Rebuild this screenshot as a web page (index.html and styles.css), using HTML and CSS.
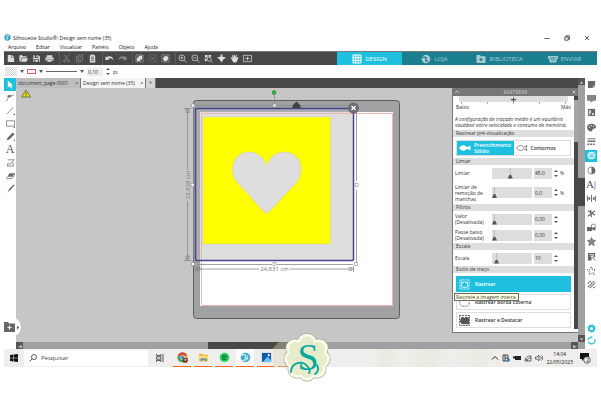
FILE: index.html
```
<!DOCTYPE html>
<html lang="pt-BR">
  <head>
    <meta charset="utf-8" />
    <title>Silhouette Studio</title>
    <link rel="stylesheet" href="styles.css">
  </head>

  <body>
    <header class="titlebar">
      <svg class="app-icon" viewBox="0 0 8 8"><circle cx="4" cy="4" r="3.6" fill="#2a9fc4"/><path d="M5.8 2.3C4 1 2 2.6 3.6 3.8S5 6 2.4 5.6" fill="none" stroke="#fff" stroke-width="1.1"/></svg>
      <span class="app-title">Silhouette Studio®: Design sem nome (35)</span>
      <div class="window-buttons">
        <button aria-label="Minimizar"><svg viewBox="0 0 6 6"><path d="M.5 3.5h5" /></svg></button>
        <button aria-label="Restaurar"><svg viewBox="0 0 6 6"><path d="M.8 2h3.4v3.2H.8zM2 2V.8h3.4v3.4H4.3" /></svg></button>
        <button aria-label="Fechar"><svg viewBox="0 0 6 6"><path d="M1 1l4 4M5 1L1 5" /></svg></button>
      </div>
    </header>

    <nav class="menu">
      <a href="#">Arquivo</a>
      <a href="#">Editar</a>
      <a href="#">Visualizar</a>
      <a href="#">Painéis</a>
      <a href="#">Objeto</a>
      <a href="#">Ajuda</a>
    </nav>

    <div class="toolbar">
      <div class="tool-group">
        <button aria-label="Novo"><svg viewBox="0 0 10 10"><path class="f" d="M2 1h4v3h3v5H2zM6.700 1L9 3.300H6.700z"/></svg></button>
        <button aria-label="Abrir"><svg viewBox="0 0 10 10"><path class="f" d="M.5 1.500h3l1 1h4V4H3L1.500 8.500h-1zM3.500 4.700H10L8.300 8.500H2.200z"/></svg></button>
        <button aria-label="Salvar"><svg viewBox="0 0 10 10"><path class="f" d="M1.500 1.500H3v3h4v-3l1.700 1v6H7.500v-3h-5v3h-1zM4.800 1.500h1.400v2H4.800zM3.500 6.500h3v2h-3z"/></svg></button>
        <button aria-label="Imprimir"><svg viewBox="0 0 10 10"><path class="f" d="M2 1.500h6v2H2zM.5 4h9v3.500H8.300V6H1.700v1.500H.5zM2.500 6.700h5v2h-5z"/></svg></button>
      </div>
      <div class="tool-group">
        <button class="dim" aria-label="Recortar"><svg viewBox="0 0 10 10"><path class="s" d="M2.500 1l4 6M7.500 1l-4 6"/><circle class="s" cx="2.800" cy="7.800" r="1.100"/><circle class="s" cx="7.200" cy="7.800" r="1.100"/></svg></button>
        <button class="dim" aria-label="Copiar"><svg viewBox="0 0 10 10"><path class="s" d="M3.500 1h5v6h-5zM3 3H1.500v6h5V7.500M5 3h2M5 4.500h2"/></svg></button>
        <button aria-label="Colar"><svg viewBox="0 0 10 10"><path class="f" d="M3.500.5h3v1H8V9.500H2v-8h1.500z"/><path d="M3.200 3.500h3.600M3.200 5.300h3.600M3.200 7.100h3.600" stroke="#484848" stroke-width=".8"/></svg></button>
      </div>
      <div class="tool-group">
        <button aria-label="Desfazer"><svg viewBox="0 0 10 10"><path class="f" d="M.5 2.500l1.400 1C4.500 1.500 9 2.500 9.500 7 7.500 4.700 5.500 4.500 3.800 5l1.400 1.200-4.700.8z"/></svg></button>
        <button class="dim" aria-label="Refazer"><svg viewBox="0 0 10 10"><path class="f" d="M9.500 2.500l-1.400 1C5.500 1.500 1 2.500.5 7 2.500 4.700 4.500 4.500 6.200 5L4.800 6.200l4.700.8z"/></svg></button>
      </div>
      <div class="tool-group">
        <button aria-label="Selecionar tudo"><svg viewBox="0 0 10 10"><path class="s" stroke-dasharray="1 1" d="M1 1h8v8H1z"/><path class="f" d="M2 4h2V2h4v4H6v2H2z"/></svg></button>
        <button class="dim" aria-label="Desmarcar"><svg viewBox="0 0 10 10"><path class="s" stroke-dasharray="1 1" d="M1 1h8v8H1z"/><path class="s" d="M3 3l4 4M7 3L3 7"/></svg></button>
        <button aria-label="Selecionar por cor"><svg viewBox="0 0 10 10"><path class="s" stroke-dasharray="1 1" d="M1 1h8v8H1z"/><path class="f" d="M2 4.500L5 2l3 1v3L5 8.500 3 7z"/></svg></button>
      </div>
      <div class="tool-group">
        <button aria-label="Mais zoom"><svg viewBox="0 0 10 10"><circle class="s" cx="4.300" cy="4.300" r="3.300"/><path class="s" d="M6.700 6.700L9.500 9.500M2.700 4.300h3.200M4.300 2.700v3.200"/></svg></button>
        <button aria-label="Menos zoom"><svg viewBox="0 0 10 10"><circle class="s" cx="4.300" cy="4.300" r="3.300"/><path class="s" d="M6.700 6.700L9.500 9.500M2.700 4.300h3.200"/></svg></button>
        <button aria-label="Zoom na seleção"><svg viewBox="0 0 10 10"><path class="f" d="M1 1h3v3H1zM5 1h3v2H5zM1 5h2v3H1z"/><circle class="s" cx="5.800" cy="5.800" r="2.200"/><path class="s" d="M7.500 7.500l2 2"/></svg></button>
        <button aria-label="Arrastar zoom"><svg viewBox="0 0 10 10"><path class="f" d="M4 .5h2v2.500l3.500.5v1L7.500 5.500 5 9.500 2.500 5.500.5 4.500v-1L4 3z"/></svg></button>
        <button aria-label="Panorâmica"><svg viewBox="0 0 10 10"><path class="f" d="M.7 4l1-.5L3 5 2.200 1.500h1L4.200 4V.7h1.100L5.600 4l.9-3 1 .2L7.200 5l1.400-2 .9.5L7.800 8l-1 1.500H3.700z"/></svg></button>
        <button aria-label="Ajustar à janela"><svg viewBox="0 0 10 10"><path class="s" d="M.5 1.500h9v7h-9zM2.500 5h5M5 3v4"/></svg></button>
      </div>
      <nav class="modes">
        <a href="#" class="active"><svg viewBox="0 0 10 10"><path d="M1 1h8v8H1zM3.700 1v8M6.300 1v8M1 3.700h8M1 6.300h8" fill="none" stroke="#fff" stroke-width="1"/></svg>DESIGN</a>
        <a href="#"><svg viewBox="0 0 10 10"><circle cx="5" cy="5" r="4.300" fill="#a5cbd2"/><path d="M1 3.500c3-1 5 0 4 1.500S5 7.500 7 7" fill="none" stroke="#1b7f90" stroke-width="1.300"/></svg>LOJA</a>
        <a href="#"><svg viewBox="0 0 10 10"><path d="M.5 1h3.500l1 1.200h4.500V9h-9z" fill="#a5cbd2"/><path d="M5 3.700v3.600M3.200 5.500h3.600" stroke="#1b7f90" stroke-width="1.200"/></svg>BIBLIOTECA</a>
        <a href="#"><svg viewBox="0 0 10 10"><path d="M0 2h10v3H8.500v3.500h-7V5H0z" fill="#a5cbd2"/><path d="M1.500 4h7M3 6h4" stroke="#1b7f90" stroke-width=".8"/></svg>ENVIAR</a>
      </nav>
    </div>

    <div class="options">
      <button class="swatch checker" aria-label="Cor de preenchimento"></button>
      <span class="caret"></span>
      <button class="swatch outline" aria-label="Cor da linha"></button>
      <span class="caret"></span>
      <button class="line-style" aria-label="Estilo de linha"></button>
      <span class="caret"></span>
      <input type="text" id="thickness" value="0,10">
      <span class="spinner"><button aria-label="Aumentar"></button><button aria-label="Diminuir"></button></span>
      <label for="thickness">pt</label>
    </div>

    <main class="workspace">
      <aside class="toolbox">
        <button class="selected" aria-label="Selecionar"><svg viewBox="0 0 10 10"><path d="M2 .5l6 5.700-2.500.2L7 9l-1.300.6-1.300-2.700L2 8.500z" fill="#fff"/></svg></button>
        <button aria-label="Editar pontos"><svg viewBox="0 0 10 10"><path class="s" d="M1 9c0-4 3-5.500 8-7M.5 3.500h6"/><path class="f" d="M2.500 2.300h2.500v2.500H2.500z"/></svg></button>
        <button aria-label="Linha"><svg viewBox="0 0 10 10"><path class="s" d="M1 9l7-7.500"/><path class="f" d="M10 8v2H8z"/></svg></button>
        <button aria-label="Retângulo"><svg viewBox="0 0 10 10"><path class="s" d="M.5 2h9v6h-9z"/><path class="f" d="M10 8v2H8z"/></svg></button>
        <button aria-label="Desenho livre"><svg viewBox="0 0 10 10"><path class="f" d="M7.500.5L9.500 2.500 4 8 .5 9.500 2 6z"/><path class="f" d="M10 8v2H8z"/></svg></button>
        <button class="letter" aria-label="Texto">A</button>
        <button aria-label="Esboço"><svg viewBox="0 0 10 10"><path class="s" d="M2 2h6M1.500 9h7l-1-4M1.500 9l1-4M3 7l2-.3L9.500 1"/></svg></button>
        <button aria-label="Borracha"><svg viewBox="0 0 10 10"><path class="f" d="M4 2.500h5.500L7 6.500H1.500z"/><path class="s" d="M1 6.500v2h5.500l3-4v-2"/></svg></button>
        <button aria-label="Faca"><svg viewBox="0 0 10 10"><path class="f" d="M8.500.5l1 1L5.500 6 1.500 9.500 4 5z"/></svg></button>
        <button class="library" aria-label="Abrir biblioteca"><svg viewBox="0 0 16 14"><path d="M0 2h4l1 1.500h6V12H0z" fill="#666"/><path d="M5.500 5.500v4M3.500 7.500h4" stroke="#fff" stroke-width="1.200"/><path d="M13 5.500l2 2-2 2z" fill="#555"/></svg></button>
      </aside>

      <section class="stage">
        <div class="tabs">
          <button class="tab">document_page-0001 <span>×</span></button>
          <button class="tab current">Design sem nome (35) <span>×</span></button>
          <button class="tab add" aria-label="Novo documento">+</button>
        </div>

        <div class="canvas">
          <svg class="drawing" viewBox="0 0 430 254" width="430" height="254">
            <!-- warning -->
            <path d="M10 2l4.500 7h-9z" fill="#f3e600" stroke="#555" stroke-width=".8"/>
            <path d="M10 4.500v2.200M10 7.400v.9" stroke="#333" stroke-width=".9"/>
            <!-- mat and page -->
            <rect x="177.500" y="12.500" width="206" height="218" rx="3" fill="#9fa1a2" stroke="#5a5c5e"/>
            <rect x="184" y="24" width="193" height="194" fill="#fff"/>
            <rect x="179.500" y="20.500" width="158" height="152" fill="#abacb2"/>
            <path d="M184 24h153v148H184z" fill="#dedede"/>
            <path d="M185.500 25.500h191v192h-191z" fill="none" stroke="#edb4b4"/>
            <path fill="#ffff00" stroke="#c9c9b0" stroke-width=".5" fill-rule="evenodd" d="M187 29h127.500v127H187zM250.700 125.500C244 121 234 108 229 102.500 221 95 216.500 90 216.500 81c0-10 7-17 16.500-17 8.500 0 14.500 5 17.700 13.500C254 69 260 64 268 64c10 0 17 7 17 17 0 9-4.500 14-12 21.500C267 108 257 121 250.700 125.500z"/>
            <rect x="179.500" y="20.500" width="158" height="152" rx="1" fill="none" stroke="#45458a" stroke-width="1.500"/>
            <!-- selection frame and dimensions -->
            <path d="M179 17.500h76M262 17.500h78M177.500 19v153M340.500 20v73M340.500 102v73M180 176.500h76M261 176.500h76M171.500 20v62M171.500 113v59M168 20.500h7M168 172.500h7M180 181h63M274 181h63M179.500 178v6M337.500 178v6M258.500 6v9" fill="none" stroke="#8a8a8a" stroke-width=".8"/>
            <path d="M170 21.500h3v3h-3zM170 168h3v3h-3zM181 179.500h3v3h-3zM333 179.500h3v3h-3z" fill="none" stroke="#777" stroke-width=".6"/>
            <path d="M175.500 16h3v3h-3zM257 16h3v3h-3zM175 95.500h3v3h-3zM339 95.500h3v3h-3zM175.500 174.500h3v3h-3zM257 174.500h3v3h-3zM338.500 174.500h3v3h-3z" fill="#fff" stroke="#888" stroke-width=".6"/>
            <circle cx="258" cy="4.500" r="1.800" fill="#19d819" stroke="#286428" stroke-width=".7"/>
            <path d="M276.500 17.500l4-4 4 4v2.500h-8z" fill="#3f4144"/>
            <circle cx="337.500" cy="20" r="5.500" fill="#6b6d70"/>
            <path d="M335.500 18l4 4M339.500 18l-4 4" stroke="#fff" stroke-width="1.200"/>
            <text x="258.500" y="183" text-anchor="middle">24,831 cm</text>
            <text transform="translate(173.500 97) rotate(-90)" text-anchor="middle">23,939 cm</text>
          </svg>

          <section class="panel">
            <header class="panel-head">
              <svg viewBox="0 0 6 6"><path d="M1 4l2-2 2 2"/></svg>
              <h2>RASTREAR</h2>
              <svg viewBox="0 0 6 6"><path d="M1.500 1.500l3 3M4.500 1.500l-3 3"/></svg>
            </header>
            <div class="panel-main">
              <div class="panel-body">
                <div class="quality">
                  <input type="range" aria-label="Qualidade" min="0" max="4" value="2">
                  <div class="ticks"><i></i><i></i><i></i><i></i><i></i></div>
                  <div class="ends"><span>Baixo</span><span>Máx</span></div>
                </div>
                <p class="hint">A configuração de traçado médio é um equilíbrio saudável entre velocidade e consumo de memória.</p>

                <h3>Rastrear pré-visualização</h3>
                <div class="preview">
                  <button class="on"><svg viewBox="0 0 12 8"><path d="M0 4c3-4 6-3 8-.7L11.500 1.500v5L8 4.700C6 7 3 8 0 4z" fill="#fff"/></svg>Preenchimento Sólido</button>
                  <button><svg viewBox="0 0 12 8"><path d="M.5 4c3-4 5.500-2.500 7-.7L11 1.500 10 4l1 2.500-3.500-1.800C6 6.500 3.500 8 .5 4z" fill="none" stroke="#666" stroke-width=".8"/></svg>Contornos</button>
                </div>

                <h3>Limiar</h3>
                <div class="field">
                  <label for="threshold">Limiar</label>
                  <input type="range" aria-label="Limiar" value="45">
                  <input type="text" id="threshold" value="45,0">
                  <span class="spinner"><button aria-label="Aumentar"></button><button aria-label="Diminuir"></button></span>
                  <span>%</span>
                </div>
                <div class="field tall">
                  <label for="speck">Limiar de remoção de manchas</label>
                  <input type="range" aria-label="Limiar de remoção de manchas" value="0">
                  <input type="text" id="speck" value="0,0">
                  <span class="spinner"><button aria-label="Aumentar"></button><button aria-label="Diminuir"></button></span>
                  <span>%</span>
                </div>

                <h3>Filtros</h3>
                <div class="field">
                  <label for="high">Valor (Desativada)</label>
                  <input type="range" aria-label="Valor" value="0">
                  <input type="text" id="high" value="0,00">
                  <span class="spinner"><button aria-label="Aumentar"></button><button aria-label="Diminuir"></button></span>
                </div>
                <div class="field">
                  <label for="low">Passe baixo (Desativada)</label>
                  <input type="range" aria-label="Passe baixo" value="0">
                  <input type="text" id="low" value="0,00">
                  <span class="spinner"><button aria-label="Aumentar"></button><button aria-label="Diminuir"></button></span>
                </div>

                <h3>Escala</h3>
                <div class="field">
                  <label for="scale">Escala</label>
                  <input type="range" aria-label="Escala" value="6">
                  <input type="text" id="scale" value="10">
                  <span class="spinner"><button aria-label="Aumentar"></button><button aria-label="Diminuir"></button></span>
                </div>

                <h3>Estilo de traço</h3>
                <div class="styles">
                  <button class="on"><svg viewBox="0 0 12 12"><path d="M1 1h10v10H1z" fill="none" stroke="#fff" stroke-width=".9" stroke-dasharray="2 1"/><path d="M3 3l2 1 1-1 1 1 2-1v3l1 2-2 1H4L2 8l1-2z" fill="none" stroke="#fff"/></svg>Rastrear</button>
                  <button><svg viewBox="0 0 12 12"><path d="M1 5v3l2 2h6l2-2V5" fill="none" stroke="#666" stroke-dasharray="2 1"/></svg>Rastrear Borda Externa</button>
                  <button><svg viewBox="0 0 12 12"><path d="M.5.500h11v11H.5z" fill="none" stroke="#444" stroke-dasharray="2 1"/><path d="M2 3l2-1 2 1 2-1 3 1v7H3L1 7z" fill="#555"/></svg>Rastrear e Destacar</button>
                  <div class="tooltip" role="tooltip">Rastreie a imagem inteira.</div>
                </div>
              </div>
              <div class="panel-scroll"></div>
            </div>
          </section>
        </div>

        <div class="hscroll"><button aria-label="Esquerda">◀</button><i></i><button aria-label="Direita">▶</button></div>
      </section>

      <div class="vscroll"><button aria-label="Para cima">▲</button><i></i><button aria-label="Para baixo">▼</button></div>

      <aside class="rail">
        <div class="rail-tools">
          <button aria-label="Página"><svg viewBox="0 0 10 10"><path class="f" d="M1 1h8v5.500H6.500V9H1z"/><path class="f" d="M7 7h2L7 9z"/></svg></button>
          <button aria-label="Tela"><svg viewBox="0 0 10 10"><path class="f" d="M0 1h10v6.500H7L5 9.500 3 7.500H0z" opacity=".8"/></svg></button>
          <button aria-label="PixScan"><svg viewBox="0 0 10 10"><path class="f" d="M1 1h8v8H1z"/><path d="M2.500 8V3h1.500v2.500H2.500M5.500 5.500l2 2.500M7.500 5.500l-2 2.500" fill="none" stroke="#fff" stroke-width=".9"/></svg></button>
          <button aria-label="Preenchimento"><svg viewBox="0 0 10 10"><path class="f" d="M5 .8c3 0 5 1.700 5 3.700S8 6.500 7 6.500s-.5 3-2.500 3S0 7.500 0 5 2 .8 5 .8z"/><path fill="#fff" d="M2 4h1.200v1.200H2zM4 2.300h1.200v1.200H4zM6.700 3h1.200v1.200H6.700z"/></svg></button>
          <button aria-label="Estilo de linha"><svg viewBox="0 0 10 10"><path stroke="#666" d="M.5 2h9"/><path stroke="#666" stroke-width="1.500" d="M.5 4.700h9"/><path stroke="#666" stroke-width="1.500" stroke-dasharray="2 1" d="M.5 8h9"/></svg></button>
          <button class="selected" aria-label="Rastrear"><svg viewBox="0 0 10 10"><path d="M1.500 2.500l1.500-1h4l1.500 1 .5 3-1.500 3h-5L1 5.500z" fill="#9fe4f2" stroke="#fff" stroke-width=".9"/><path d="M3.500 4.500h3v2h-3z" fill="#5fd3e9"/></svg></button>
          <button aria-label="Contraste"><svg viewBox="0 0 10 10"><circle class="s" cx="5" cy="5" r="4"/><path class="f" d="M5 1a4 4 0 010 8z"/></svg></button>
          <button class="letter" aria-label="Texto">A|</button>
          <button aria-label="Alinhar"><svg viewBox="0 0 10 10"><path class="f" d="M0 2h1v6H0zM1.500 3.500h2v3h-2zM4.500 1h1v8h-1zM6.500 3.500h2v3h-2zM9 2h1v6H9z"/></svg></button>
          <button aria-label="Replicar"><svg viewBox="0 0 10 10"><path d="M1 2l8 5M4 1l1 8M9 2L1 8" stroke="#666" stroke-width="1.300"/></svg></button>
          <button aria-label="Modificar"><svg viewBox="0 0 10 10"><path class="f" d="M0 4.500h5.500v4.500H0z"/><circle class="s" cx="7" cy="3.500" r="2.300"/><path class="f" d="M6 5h3.500v3H6z"/></svg></button>
          <button aria-label="Deslocar"><svg viewBox="0 0 10 10"><path d="M5 .5l1.300 3 3.400.3-2.500 2.300.8 3.500L5 7.800 2 9.600l.8-3.500L.3 3.800l3.400-.3z" fill="#888" stroke="#666" stroke-width=".8"/></svg></button>
          <button aria-label="Arranjar"><svg viewBox="0 0 10 10"><path class="f" d="M1 1h8v5H5v3.500H1z"/><path d="M3 3h4v2H4" fill="none" stroke="#fff"/><path class="s" d="M6 7l3.500 2"/></svg></button>
          <button aria-label="Strass"><svg viewBox="0 0 10 10"><path d="M5 .8l1.300 3 3.200.3-2.500 2.200.8 3L5 8 2.200 9.300l.8-3L.5 4.100l3.200-.3z" fill="none" stroke="#555" stroke-width="1.200" stroke-dasharray="1 1.500"/></svg></button>
          <button aria-label="Hachura"><svg viewBox="0 0 10 10"><path d="M1 4l3-3M1 8l7-7M3 9l6-6M7 9l2-2" stroke="#666" stroke-width="1.300" stroke-dasharray="2 .5"/></svg></button>
        </div>
        <div class="rail-foot">
          <button aria-label="Preferências"><svg viewBox="0 0 10 10"><circle cx="5" cy="5" r="2.800" fill="none" stroke="#21bfdd" stroke-width="2"/><circle cx="5" cy="5" r="4.100" fill="none" stroke="#21bfdd" stroke-width="1.200" stroke-dasharray="1.600 1.600"/></svg></button>
          <button aria-label="Sincronizar"><svg viewBox="0 0 10 10"><path d="M1.500 6.500a3.700 3.700 0 107-3M1 4.500a4 4 0 015-3" fill="none" stroke="#21bfdd" stroke-width="1.500"/></svg></button>
        </div>
      </aside>
    </main>

    <footer class="taskbar">
      <button class="start" aria-label="Iniciar"><svg viewBox="0 0 8 8"><path d="M0 1l3.500-.5v3.300H0zM4 .5L8 0v3.800H4zM0 4.200h3.500v3.300L0 7zM4 4.200h4V8l-4-.5z" fill="#111"/></svg></button>
      <div class="search">
        <svg viewBox="0 0 8 8"><circle cx="5" cy="3" r="2.500" fill="none" stroke="#333" stroke-width=".8"/><path d="M3.200 4.800L.5 7.500" stroke="#333" stroke-width=".8"/></svg>
        <input type="text" aria-label="Pesquisar" placeholder="Pesquisar">
      </div>
      <button class="tasks" aria-label="Visão de tarefas"><svg viewBox="0 0 8 8"><path d="M.5 0v1.500h4.500V0M.5 8V6.500h4.500V8M.5 2.800h4.500v2.400H.5zM7 0v8" fill="none" stroke="#333" stroke-width=".8"/></svg></button>
      <div class="apps">
        <button aria-label="Chrome"><svg viewBox="0 0 12 12"><circle cx="6" cy="6" r="5.500" fill="#3fa650"/><path d="M1.200 3.300A5.500 5.500 0 0111.200 4H6a2 2 0 00-2 2z" fill="#e24335"/><path d="M11.200 4A5.500 5.500 0 016 11.500L8 6.500 7.500 4z" fill="#f4c020"/><circle cx="6" cy="6" r="2.200" fill="#3c7fe0" stroke="#fff" stroke-width=".7"/><circle cx="9" cy="9" r="2.800" fill="#71302f"/><circle cx="9" cy="8.500" r="1.200" fill="#e5ab93"/></svg></button>
        <button aria-label="Explorador"><svg viewBox="0 0 12 12"><path d="M1 2h4l1 1h5v7H1z" fill="#f2bd3d"/><path d="M1 4.500h10V7H1z" fill="#fbdb80"/><path d="M3 10V7h6v3H7.500V8.500h-3V10z" fill="#3f8fd0"/></svg></button>
        <button aria-label="Spotify"><svg viewBox="0 0 12 12"><circle cx="6" cy="6" r="5.200" fill="#1ed760"/><path d="M3 4.300c2-.6 4.500-.4 6.200.6M3.300 6.200c1.700-.5 3.700-.3 5.200.5M3.600 8c1.400-.4 3-.2 4.200.4" fill="none" stroke="#153d22" stroke-width=".9"/></svg></button>
        <button class="front" aria-label="Silhouette"><svg viewBox="0 0 12 12"><circle cx="6" cy="6" r="5.200" fill="#45add0"/><path d="M1 3.500c4-1.500 6 0 5 2s0 3 3 1.500M3 9c3 .5 5-.5 5.500-5" fill="none" stroke="#d8f0f7" stroke-width="1.200"/></svg></button>
        <button aria-label="Fotos"><svg viewBox="0 0 12 12"><rect x="1" y="1" width="10" height="10" fill="#1559ad"/><path d="M2 11l5-6 4 4v2z" fill="#69c3f3"/><circle cx="8.500" cy="3.500" r="1.200" fill="#fff"/></svg></button>
        <button aria-label="Aplicativo"></button>
      </div>
      <div class="tray">
        <svg viewBox="0 0 8 8"><path d="M1 5.500l3-3 3 3" fill="none" stroke="#222"/></svg>
        <svg viewBox="0 0 8 8"><path d="M1 1h5v6H1zM3 1v6M3 4h3" fill="none" stroke="#333" stroke-width=".9"/><circle cx="6.500" cy="6" r="1.500" fill="#2377cb"/></svg>
        <svg viewBox="0 0 8 8"><path d="M0 2.500h1.500V2H8v4H2V4.500H0z" fill="#222"/></svg>
        <svg viewBox="0 0 8 8"><path d="M1 7c0-3 2.500-5 6-5v5zM3 7c0-2 2-3 4-3M1 4l3 3" fill="none" stroke="#444" stroke-width=".8"/></svg>
        <svg viewBox="0 0 8 8"><path d="M.5 3h1.500L4 1.200v5.600L2 5H.5zM5.300 2.500c1 1 1 2 0 3M6.500 1.500c1.500 1.600 1.500 3.400 0 5" fill="none" stroke="#333" stroke-width=".7"/></svg>
        <time>14:04<br>22/05/2025</time>
        <button aria-label="Notificações"><svg viewBox="0 0 12 12"><path d="M1 1h9v6H5L3 9V7H1z" fill="#111"/><circle cx="8" cy="8" r="3.300" fill="#eee" stroke="#333" stroke-width=".7"/></svg><b>2</b></button>
      </div>
      <svg class="badge" viewBox="0 0 50 50" aria-label="Logotipo">
        <path d="M-8 15v20M-6 13v22M-4 11v24M-2 10v25M0 9v26M2 8v28M4 7v30" stroke="#d9d7b8" stroke-width=".8"/>
        <g fill="#a9aa9a"><circle cx="25" cy="11.500" r="10.500"/><circle cx="37" cy="16" r="9.500"/><circle cx="39" cy="27" r="9.500"/><circle cx="35" cy="37" r="9.500"/><circle cx="25" cy="39.500" r="10"/><circle cx="15" cy="37" r="9.500"/><circle cx="11" cy="27" r="9.500"/><circle cx="13" cy="16" r="9.500"/></g>
        <g fill="#fafbea"><circle cx="25" cy="11.500" r="9.800"/><circle cx="37" cy="16" r="8.800"/><circle cx="39" cy="27" r="8.800"/><circle cx="35" cy="37" r="8.800"/><circle cx="25" cy="39.500" r="9.300"/><circle cx="15" cy="37" r="8.800"/><circle cx="11" cy="27" r="8.800"/><circle cx="13" cy="16" r="8.800"/></g>
        <g fill="#e7eccb"><circle cx="25" cy="12" r="7.500"/><circle cx="36" cy="17" r="7"/><circle cx="38" cy="27" r="7"/><circle cx="34" cy="36" r="7"/><circle cx="25" cy="38.500" r="7.500"/><circle cx="16" cy="36" r="7"/><circle cx="12" cy="27" r="7"/><circle cx="14" cy="17" r="7"/><circle cx="25" cy="25" r="16"/></g>
        <text x="26" y="38" text-anchor="middle">S</text>
        <path d="M9 40c0-9 11-13 17-5 2 3 2 5 1 6M35 33c2 4 1 7-2 9" fill="none" stroke="#08a9a0" stroke-width="1.800" stroke-linecap="round"/>
      </svg>
    </footer>
  </body>
</html>
```
FILE: styles.css
```
* {
  box-sizing: border-box;
}
body {
  min-height: 100vh;
  margin: 0;
  padding: 32px 4px 16px;
  background: #fff;
  color: #333;
  font: 5px/6px "Open Sans", "Noto Sans", sans-serif;
}
button,
input {
  margin: 0;
  padding: 0;
  border: 0;
  border-radius: 0;
  background: none;
  color: inherit;
  font: inherit;
}
button {
  display: flex;
  align-items: center;
  justify-content: center;
  cursor: pointer;
}
a {
  color: inherit;
  text-decoration: none;
}
h2,
h3,
p {
  margin: 0;
  font-size: 5px;
  font-weight: 400;
}
svg {
  display: block;
  flex: none;
}

/* title and menu */
.titlebar {
  display: flex;
  align-items: center;
  gap: 2px;
  height: 11px;
  color: #222;
}
.app-icon {
  width: 7px;
  height: 7px;
}
.window-buttons {
  display: flex;
  gap: 14px;
  margin-left: auto;
  padding-right: 7px;
}
.window-buttons svg {
  width: 6px;
  height: 6px;
  fill: none;
  stroke: #333;
  stroke-width: 0.8;
}
.menu {
  display: flex;
  gap: 10px;
  height: 8px;
  padding: 1px 0 0 4px;
  color: #111;
}

/* toolbar */
.toolbar {
  display: flex;
  height: 14px;
  background: #484848;
  border-top: 1px solid #777;
}
.tool-group {
  display: flex;
}
.tool-group + .tool-group {
  margin-left: 3px;
  border-left: 1px solid #5d5d5d;
}
.tool-group button {
  width: 13px;
}
.tool-group svg {
  width: 9px;
  height: 9px;
}
.tool-group .dim {
  opacity: 0.45;
}
.tool-group .f {
  fill: #ddd;
}
.tool-group .s {
  fill: none;
  stroke: #ddd;
}
.modes {
  display: grid;
  grid-template-columns: repeat(4, 65px);
  margin-left: auto;
  background: #1b7f90;
  color: #a5cbd2;
  font-size: 6px;
}
.modes a {
  display: flex;
  align-items: center;
  justify-content: center;
  gap: 3px;
}
.modes svg {
  width: 10px;
  height: 10px;
}
.modes .active {
  background: #1fc0df;
  color: #fff;
}

/* line options */
.options {
  display: flex;
  align-items: center;
  gap: 3px;
  height: 13px;
  padding-left: 1px;
}
.swatch {
  width: 12px;
  height: 9px;
}
.checker {
  background: repeating-conic-gradient(#d5d5d5 0 25%, #fff 0 50%) 0 0 / 2px 2px;
}
.outline {
  width: 9px;
  height: 5px;
  border: 1px solid #d05c5c;
}
.caret {
  border: 2px solid transparent;
  border-top: 3px solid #555;
  border-bottom: 0;
}
.line-style {
  width: 31px;
  height: 1px;
  background: #666;
}
.options input {
  width: 16px;
  height: 8px;
  padding-left: 1px;
  background: #eee;
}
.spinner {
  display: flex;
  flex-direction: column;
  gap: 3px;
  width: 4px;
}
.spinner button {
  border: 2px solid transparent;
  border-top: 0;
  border-bottom: 2px solid #555;
}
.spinner button + button {
  transform: rotate(180deg);
}

/* left tools */
.workspace {
  display: flex;
}
.toolbox {
  display: flex;
  flex-direction: column;
  width: 12px;
}
.toolbox button {
  height: 13px;
}
.toolbox svg {
  width: 9px;
  height: 9px;
}
.f {
  fill: #666;
}
.s {
  fill: none;
  stroke: #666;
  stroke-width: 0.8;
}
.selected {
  background: #1fc0df;
}
.letter {
  color: #555;
  font: 12px/13px "Liberation Serif", serif;
}
.toolbox .library {
  justify-content: start;
  width: 17px;
  height: 20px;
  margin-top: auto;
  margin-bottom: 12px;
  background: #fff;
  border-radius: 0 10px 10px 0;
  z-index: 1;
}
.toolbox .library svg {
  width: 16px;
  height: 14px;
}

/* documents */
.stage {
  display: flex;
  flex: 1;
  flex-direction: column;
  min-width: 0;
}
.tabs {
  display: flex;
  height: 10px;
  background: #484848;
}
.tab {
  justify-content: space-between;
  width: 65px;
  padding: 0 2px;
  background: #bdbdbd;
  border-right: 1px solid #777;
  white-space: nowrap;
}
.tab.current {
  background: #f5f5f5;
}
.tab.add {
  justify-content: center;
  width: 10px;
  background: #d5d5d5;
}
.canvas {
  display: flex;
  justify-content: space-between;
  background: #c6c6c6;
}
.drawing {
  flex: 0 1 430px;
  min-width: 0;
}
.drawing text {
  fill: #777;
  font-size: 6px;
}

/* scrollbars */
.hscroll,
.vscroll {
  display: flex;
  background: #9fa0a1;
}
.hscroll {
  height: 7px;
}
.vscroll {
  flex-direction: column;
  width: 7px;
  padding-bottom: 7px;
}
.hscroll button,
.vscroll button {
  width: 7px;
  height: 7px;
  background: #555;
  color: #bbb;
}
.hscroll i {
  width: 16%;
  margin: 0 auto 0 33%;
  background: #484848;
}
.vscroll i {
  height: 28px;
  margin: 93px 0 auto;
  background: #484848;
}

/* trace panel */
.panel {
  flex: none;
  width: 126px;
  margin-bottom: 9px;
  background: #fff;
  border: solid #777;
  border-width: 0 0 1px 1px;
}
.panel-head {
  display: flex;
  align-items: center;
  justify-content: space-between;
  height: 8px;
  padding: 0 1px;
  background: #777;
  color: #ccc;
}
.panel-head svg {
  width: 6px;
  height: 6px;
  fill: none;
  stroke: #ddd;
  stroke-width: 0.8;
}
.panel-main {
  display: flex;
}
.panel-body {
  flex: 1;
}
.panel-scroll {
  width: 4px;
  background: linear-gradient(#444 4px, #a5a5a5 4px 46px, #484848 46px);
}
.quality {
  padding: 0 6px;
}
.quality input {
  display: block;
  width: 100%;
  height: 6px;
}
.ticks,
.ends {
  display: flex;
  justify-content: space-between;
}
.ticks {
  height: 2px;
  padding: 0 2px;
}
.ticks i {
  width: 1px;
  background: #aaa;
}
.ends {
  margin: 0 -3px;
}
.hint {
  height: 20px;
  padding: 6px 2px 0;
  font-style: italic;
}
.panel h3 {
  height: 7px;
  padding-left: 3px;
  background: #dedede;
  line-height: 7px;
}
.preview {
  display: grid;
  grid-template-columns: 1fr 1fr;
  height: 16px;
  margin: 3px 3px 2px;
  border: 1px solid #ddd;
}
.preview button {
  justify-content: start;
  gap: 3px;
  padding-left: 2px;
  font-weight: 600;
  text-align: left;
}
.preview svg {
  width: 12px;
  height: 8px;
}
.on {
  background: #1fc0df;
  color: #fff;
}
.field {
  display: grid;
  grid-template-columns: 35px 40px 18px 4px 4px;
  gap: 2px;
  align-items: center;
  height: 16px;
  padding-left: 2px;
}
.field.tall {
  height: 23px;
}
.field input {
  width: 100%;
  height: 11px;
}
.field input[type="text"] {
  padding-left: 1px;
  background: #dedede;
}
input[type="range"] {
  appearance: none;
  background: #dedede;
}
input[type="range"]::-webkit-slider-thumb {
  appearance: none;
  width: 5px;
  height: 11px;
  background: linear-gradient(#bbb 60%, #555 60%);
  clip-path: polygon(40% 0, 60% 0, 60% 60%, 100% 100%, 0 100%, 40% 60%);
}
.quality input[type="range"]::-webkit-slider-thumb {
  height: 6px;
  background: #555;
  clip-path: polygon(40% 20%, 60% 20%, 60% 50%, 100% 50%, 100% 70%, 60% 70%, 60% 100%, 40% 100%, 40% 70%, 0 70%, 0 50%, 40% 50%);
}
.styles {
  position: relative;
  display: grid;
  gap: 2px;
  padding: 3px 3px 1px;
}
.styles button {
  justify-content: start;
  gap: 5px;
  height: 16px;
  padding-left: 2px;
  border: 1px solid #ddd;
  font-weight: 600;
}
.styles .on {
  border-color: #1fc0df;
}
.styles svg {
  width: 11px;
  height: 11px;
}
.tooltip {
  position: absolute;
  top: 20px;
  left: 1px;
  padding: 0 1px;
  background: #ffffe1;
  border: 1px solid #666;
  color: #444;
  white-space: nowrap;
}

/* right rail */
.rail {
  display: flex;
  flex-direction: column;
  gap: 31px;
  width: 12px;
  padding-bottom: 3px;
}
.rail button {
  width: 12px;
  height: 12px;
}
.rail svg {
  width: 9px;
  height: 9px;
}
.rail-tools {
  display: flex;
  flex: 1;
  flex-direction: column;
  justify-content: space-between;
}
.rail .letter {
  font-size: 11px;
}

/* windows taskbar */
.taskbar {
  position: relative;
  display: flex;
  height: 18px;
  background: linear-gradient(100deg, #efeeec 62%, #e6ebdf 64%, #efeeec 67%, #e7ebe0 72%, #efeeec 75%, #e8ece2 80%, #efeeec 83%);
  color: #222;
}
.start {
  width: 20px;
}
.start svg,
.search svg,
.tasks svg,
.tray > svg {
  width: 8px;
  height: 8px;
}
.search {
  display: flex;
  flex: 0 1 124px;
  align-items: center;
  gap: 4px;
  margin: 1px 0;
  padding-left: 5px;
  background: #fff;
}
.search input {
  width: 80px;
  font-size: 6px;
}
.search input::placeholder {
  color: #444;
}
.tasks {
  width: 23px;
}
.apps {
  display: flex;
  gap: 3px;
  margin-left: 2px;
}
.apps button {
  width: 18px;
  border-bottom: 1px solid #f26a1b;
}
.apps svg {
  width: 11px;
  height: 11px;
}
.apps .front {
  background: #fafafa;
}
.tray {
  display: flex;
  align-items: center;
  gap: 3px;
  margin-left: auto;
  padding-right: 6px;
}
.tray time {
  margin-right: 3px;
  line-height: 8px;
  text-align: center;
}
.tray button {
  position: relative;
}
.tray button svg {
  width: 12px;
  height: 12px;
}
.tray b {
  position: absolute;
  right: 2px;
  bottom: 1px;
  font-weight: 400;
}
.badge {
  position: absolute;
  bottom: -15px;
  left: 278px;
  width: 50px;
  height: 50px;
  overflow: visible;
}
.badge text {
  fill: #08a9a0;
  font: 38px "Liberation Serif", serif;
}
```
